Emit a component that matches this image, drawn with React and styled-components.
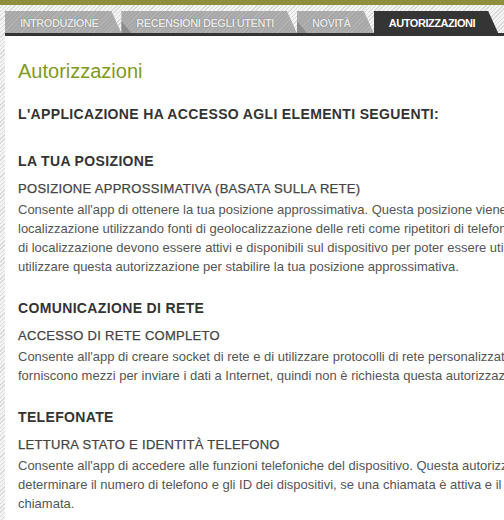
import React from 'react'
import styled, { createGlobalStyle } from 'styled-components'

const GlobalStyle = createGlobalStyle`
  html, body {
    margin: 0;
    padding: 0;
    overflow: hidden;
  }
  body {
    font-family: "Liberation Sans", Arial, sans-serif;
    background: #fff;
  }
`;

const Page = styled.div`
  width: 504px;
  height: 520px;
  background: repeating-linear-gradient(
    135deg,
    #f4f4f4 0px,
    #f4f4f4 2px,
    #d9d9d9 2px,
    #d9d9d9 3px
  );
  overflow: hidden;
`;

const TopBar = styled.div`
  height: 5px;
  background: #8e8e3c;
`;

const Main = styled.div`
  margin-left: 5px;
  padding-top: 6px;
`;

const Tabs = styled.nav`
  display: flex;
  height: 22px;
`;

const Tab = styled.div`
  position: relative;
  height: 22px;
  display: flex;
  align-items: center;
  padding: 1px 23px 0 15px;
  box-sizing: border-box;
  font-family: "Liberation Sans", Arial, sans-serif;
  font-weight: bold;
  font-size: 11px;
  letter-spacing: -0.45px;
  white-space: nowrap;
  color: ${props => props.active ? '#ffffff' : '#e8e8e8'};
  text-shadow: ${props => props.active ? 'none' : '0 0 1px rgba(70,70,70,0.8)'};
  background: ${props => props.active
    ? '#353535'
    : `repeating-linear-gradient(135deg, #a8a8a8 0px, #a8a8a8 2px, #b3b3b3 2px, #b3b3b3 3px)`};
  clip-path: polygon(0 0, calc(100% - 10px) 0, 100% 100%, 0 100%);

  ${props => props.fold && `
    &::before {
      content: "";
      position: absolute;
      left: 0;
      bottom: 0;
      width: 10px;
      height: 12px;
      background: #8c8c8c;
      clip-path: polygon(0 0, 100% 100%, 0 100%);
    }
  `}
`;

const TabLabel = styled.span`
  position: relative;
`;

const Content = styled.main`
  background: #fff;
  border-top: 3px solid #333;
  padding: 23px 0 40px 13px;
  min-height: 480px;
  width: 700px;
`;

const Title = styled.h1`
  margin: 0;
  font-size: 20px;
  line-height: 24px;
  font-weight: normal;
  color: #7f9a1c;
`;

const Lead = styled.h2`
  margin: 22px 0 0;
  font-size: 14px;
  line-height: 18px;
  font-weight: bold;
  letter-spacing: 0.35px;
  color: #333;
`;

const Group = styled.section`
  margin-top: ${props => props.first ? 29 : 23}px;
`;

const GroupTitle = styled.h3`
  margin: 0;
  font-size: 14px;
  line-height: 18px;
  font-weight: bold;
  letter-spacing: 0.35px;
  color: #333;
`;

const PermName = styled.h4`
  margin: 10px 0 0;
  font-size: 13px;
  line-height: 18px;
  font-weight: normal;
  letter-spacing: 0.3px;
  color: #444;
  -webkit-text-stroke: 0.25px #444;
`;

const Desc = styled.p`
  margin: 2px 0 0;
  font-size: 13px;
  line-height: 19px;
  color: #555;
`;

const Line = styled.span`
  display: block;
  white-space: nowrap;
`;

const tabs = [
  { label: 'INTRODUZIONE' },
  { label: 'RECENSIONI DEGLI UTENTI', fold: true },
  { label: 'NOVITÀ', fold: true },
  { label: 'AUTORIZZAZIONI', active: true },
];

const groups = [
  {
    title: 'LA TUA POSIZIONE',
    name: 'POSIZIONE APPROSSIMATIVA (BASATA SULLA RETE)',
    lines: [
      "Consente all'app di ottenere la tua posizione approssimativa. Questa posizione viene ricavata dai servizi di",
      'localizzazione utilizzando fonti di geolocalizzazione delle reti come ripetitori di telefonia mobile e Wi-Fi. Questi servizi',
      "di localizzazione devono essere attivi e disponibili sul dispositivo per poter essere utilizzati dall'app. Le app potrebbero",
      'utilizzare questa autorizzazione per stabilire la tua posizione approssimativa.',
    ],
  },
  {
    title: 'COMUNICAZIONE DI RETE',
    name: 'ACCESSO DI RETE COMPLETO',
    lines: [
      "Consente all'app di creare socket di rete e di utilizzare protocolli di rete personalizzati. Il browser e altre applicazioni",
      'forniscono mezzi per inviare i dati a Internet, quindi non è richiesta questa autorizzazione per inviare i dati a Internet.',
    ],
  },
  {
    title: 'TELEFONATE',
    name: 'LETTURA STATO E IDENTITÀ TELEFONO',
    lines: [
      "Consente all'app di accedere alle funzioni telefoniche del dispositivo. Questa autorizzazione consente all'app di",
      'determinare il numero di telefono e gli ID dei dispositivi, se una chiamata è attiva e il numero remoto connesso da una',
      'chiamata.',
    ],
  },
];

const App = () => (
  <>
    <GlobalStyle />
    <Page>
      <TopBar />
      <Main>
        <Tabs>
          {tabs.map(t => (
            <Tab key={t.label} active={t.active} fold={t.fold}>
              <TabLabel>{t.label}</TabLabel>
            </Tab>
          ))}
        </Tabs>
        <Content>
          <Title>Autorizzazioni</Title>
          <Lead>L'APPLICAZIONE HA ACCESSO AGLI ELEMENTI SEGUENTI:</Lead>
          {groups.map((g, i) => (
            <Group key={g.title} first={i === 0}>
              <GroupTitle>{g.title}</GroupTitle>
              <PermName>{g.name}</PermName>
              <Desc>
                {g.lines.map(l => <Line key={l}>{l}</Line>)}
              </Desc>
            </Group>
          ))}
        </Content>
      </Main>
    </Page>
  </>
);

export default App
